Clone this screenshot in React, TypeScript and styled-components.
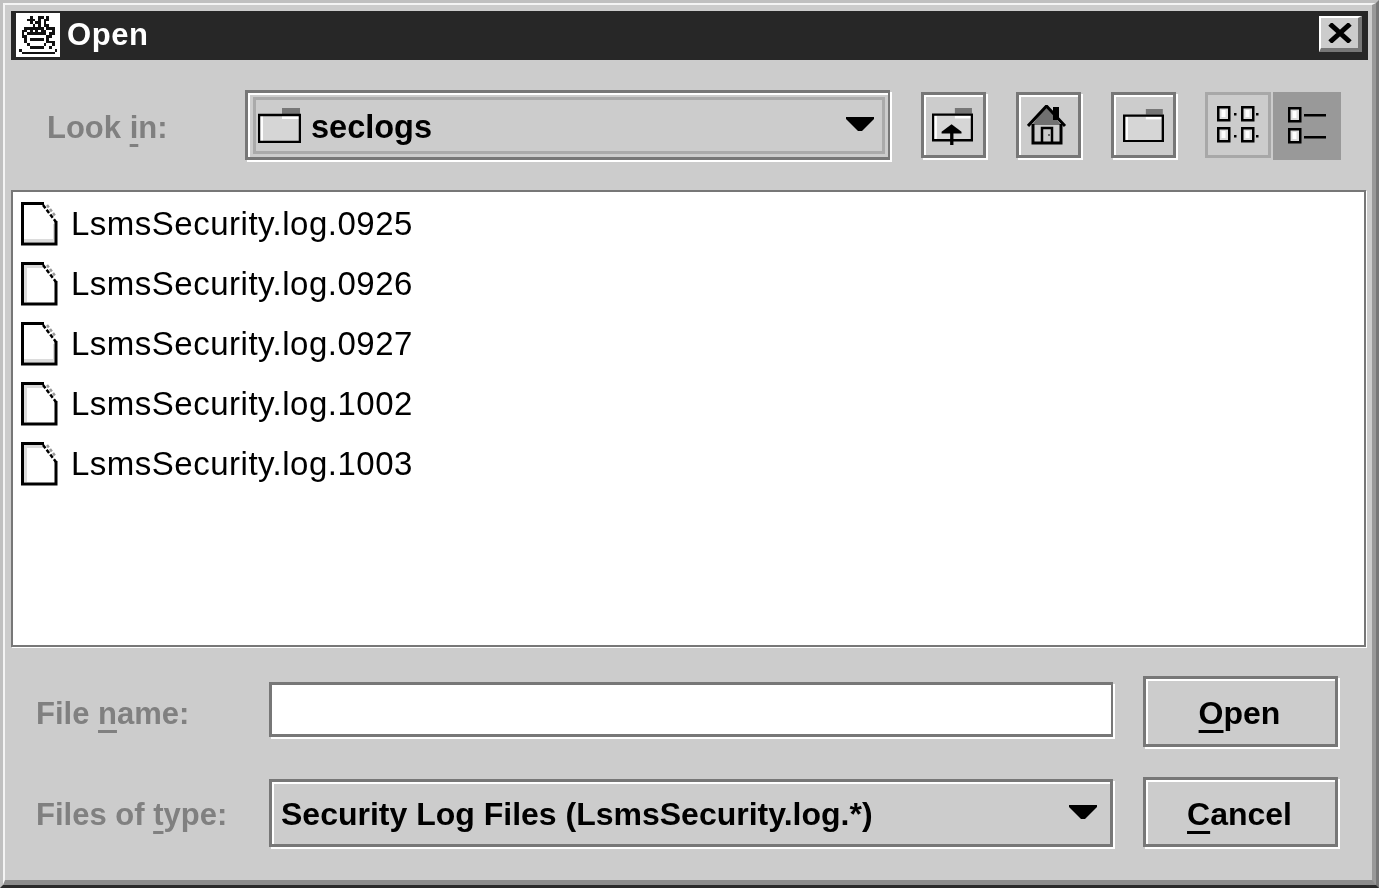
import React from "react"
import styled, { createGlobalStyle } from "styled-components"

const GlobalStyle = createGlobalStyle`
  html, body {
    margin: 0;
    padding: 0;
    background: #cccccc;
  }
  * {
    box-sizing: border-box;
  }
`

const FONT = `"Liberation Sans", Arial, sans-serif`

const Frame = styled.div`
  width: 1379px;
  height: 888px;
  border-style: solid;
  border-width: 3px;
  border-color: #c0c0c0 #777777 #2a2a2a #c0c0c0;
  font-family: ${FONT};
  overflow: hidden;
  filter: blur(0.35px);
`

const FrameInner = styled.div`
  height: 100%;
  border-style: solid;
  border-width: 2px 4px 5px 2px;
  border-color: #f4f4f4 #999999 #8c8c8c #f4f4f4;
  padding: 6px 4px 0 6px;
  background: #cccccc;
`

const TitleBar = styled.div`
  height: 49px;
  background: #272727;
  display: flex;
  align-items: center;
  padding: 0 6px 1px 5px;
`

const TitleText = styled.span`
  margin-left: 7px;
  color: #ffffff;
  font-size: 31px;
  font-weight: 700;
  letter-spacing: 0.6px;
`

const CloseButton = styled.div`
  margin-left: auto;
  margin-top: -2px;
  width: 43px;
  height: 36px;
  background: #cccccc;
  border-style: solid;
  border-width: 2px 4px 4px 2px;
  border-color: #ffffff #777777 #777777 #ffffff;
  display: flex;
  align-items: center;
  justify-content: center;
`

const ToolRow = styled.div`
  display: flex;
  align-items: flex-start;
  height: 72px;
  margin-top: 30px;
  padding-left: 36px;
`

const Label = styled.div<{ $width: number }>`
  width: ${(props) => props.$width}px;
  flex: none;
  color: #808080;
  font-size: 31px;
  font-weight: 700;
  white-space: nowrap;
`

const LookInLabel = styled(Label)`
  align-self: center;
  padding-top: 3px;
`

const Mnemonic = styled.span`
  text-decoration: underline;
  text-decoration-thickness: 3px;
  text-underline-offset: 6px;
  text-decoration-skip-ink: none;
`

const Etched = styled.div`
  border: 3px solid #777777;
  box-shadow: 2px 2px 0 0 #ffffff, inset 2px 2px 0 0 #ffffff;
`

const LookInCombo = styled(Etched)`
  width: 645px;
  height: 70px;
  margin-right: 1px;
  flex: none;
  border-right-width: 2px;
  padding: 4px 3px 3px 5px;
`

const LookInInner = styled.div`
  height: 100%;
  border: 3px solid #aaaaaa;
  display: flex;
  align-items: center;
  padding: 0 8px 0 2px;
  font-size: 32.5px;
  font-weight: 700;
  color: #000000;
`

const ComboText = styled.span`
  margin-left: 10px;
  padding-top: 4px;
  white-space: nowrap;
`

const ArrowIcon = styled.svg`
  display: block;
  margin-left: auto;
  margin-top: -4px;
  width: 28px;
  height: 14px;
`

const ToolButton = styled(Etched)`
  width: 65px;
  height: 66px;
  margin-left: 30px;
  margin-top: 2px;
  flex: none;
  display: flex;
  align-items: center;
  justify-content: center;
`

const ToggleGroup = styled.div`
  display: flex;
  align-items: flex-start;
  margin-left: 29px;
  margin-top: 2px;
  gap: 2px;
`

const Toggle = styled.div<{ $pressed?: boolean }>`
  width: ${(props) => (props.$pressed ? 68 : 66)}px;
  height: ${(props) => (props.$pressed ? 68 : 66)}px;
  display: flex;
  align-items: center;
  justify-content: center;
  background: ${(props) => (props.$pressed ? "#999999" : "transparent")};
  border: ${(props) => (props.$pressed ? "none" : "3px solid #a8a8a8")};
`

const FileList = styled.div`
  height: 457px;
  width: 1355px;
  margin-top: 28px;
  background: #ffffff;
  border: 2px solid #777777;
  box-shadow: 1px 1px 0 0 #ffffff;
  padding-top: 2px;
  padding-left: 8px;
`

const FileRow = styled.div`
  height: 60px;
  display: flex;
  align-items: center;
  font-size: 33px;
  font-weight: 400;
  color: #000000;
`

const FileName = styled.span`
  margin-left: 13px;
  white-space: nowrap;
  letter-spacing: 0.5px;
`

const FormRow = styled.div<{ $top: number }>`
  display: flex;
  align-items: flex-start;
  height: 72px;
  margin-top: ${(props) => props.$top}px;
  padding-left: 25px;
`

const FormLabel = styled(Label)`
  align-self: center;
  padding-top: 3px;
`

const Field = styled.div`
  width: 844px;
  height: 55px;
  margin-top: 6px;
  flex: none;
  background: #ffffff;
  border: 3px solid #777777;
  border-right-width: 2px;
  box-shadow: 2px 2px 0 0 #ffffff;
`

const TypeCombo = styled(Etched)`
  width: 844px;
  height: 68px;
  margin-top: 2px;
  flex: none;
  display: flex;
  align-items: center;
  padding: 4px 13px 2px 9px;
  font-size: 32px;
  font-weight: 700;
  color: #000000;
`

const TypeText = styled.span`
  white-space: nowrap;
`

const ActionButton = styled(Etched)<{ $height: number }>`
  width: 195px;
  height: ${(props) => props.$height}px;
  margin-left: 30px;
  padding: 4px 2px 0 0;
  flex: none;
  display: flex;
  align-items: center;
  justify-content: center;
  font-size: 32px;
  font-weight: 700;
  color: #000000;
`

const FolderSvg = styled.svg`
  flex: none;
  display: block;
`

const UpFolderSvg = styled.svg`
  display: block;
  margin-top: 3px;
  margin-right: 2px;
`

const HomeSvg = styled.svg`
  display: block;
  margin-right: 3px;
`

// Small pixel bitmap of the window icon, one char per pixel
const CUP_ROWS = [
  "................",
  ".....#..##.#....",
  "....###.#.##....",
  ".....#.##.#.....",
  "......#.#.##....",
  "...#######.###..",
  "..##.#.#.##..#..",
  "..#.#######.##..",
  "..##.......##...",
  "...#.#####.#....",
  "...#.......###..",
  "....#.....#..#..",
  ".....#####..#...",
  ".#............#.",
  "..############..",
  "................",
]

const CupIcon = () => (
  <FolderSvg width="44" height="44" viewBox="0 0 16 16" shapeRendering="crispEdges">
    <rect width="16" height="16" fill="#ffffff" />
    {CUP_ROWS.map((row, y) =>
      row.split("").map((c, x) => (c === "#" ? <rect key={`${x}-${y}`} x={x} y={y} width="1" height="1" fill="#111" /> : null)),
    )}
  </FolderSvg>
)

const CloseIcon = () => (
  <svg width="24" height="20" viewBox="0 0 24 20">
    <path d="M2 1 L22 19 M22 1 L2 19" stroke="#000" strokeWidth="5" fill="none" />
  </svg>
)

const Arrow = () => (
  <ArrowIcon viewBox="0 0 28 14">
    <path d="M0 0 H28 V2 L16 14 H12 L0 2 Z" fill="#000" />
  </ArrowIcon>
)

const FolderShape = () => (
  <>
    <rect x="24" y="0" width="18" height="6" fill="#777777" />
    <rect x="2" y="7" width="39" height="26" fill="#d6d6d6" />
    <rect x="24" y="8" width="17" height="3" fill="#ffffff" />
    <rect x="2" y="8" width="3" height="25" fill="#ffffff" />
    <path d="M1 34 V7 H42 V34 Z" stroke="#000" strokeWidth="2.5" fill="none" />
  </>
)

const FolderIcon = ({ small }: { small?: boolean }) => (
  <FolderSvg width={small ? 41 : 43} height={small ? 33 : 35} viewBox="0 0 43 35">
    <FolderShape />
  </FolderSvg>
)

const UpFolderIcon = () => (
  <UpFolderSvg width="41" height="37" viewBox="0 0 43 39">
    <FolderShape />
    <path d="M10 27 H31 V25 L20.5 17 L10 25 Z" fill="#000" />
    <rect x="19" y="25" width="3.5" height="14" fill="#000" />
  </UpFolderSvg>
)

const HomeIcon = () => (
  <HomeSvg width="40" height="40" viewBox="0 0 40 40">
    <path d="M19.5 1 L5 20 H34 Z" fill="#707070" />
    <rect x="26" y="2" width="6" height="13" fill="#000" />
    <path d="M1 21 L19.5 1 L38 21" stroke="#000" strokeWidth="3" fill="none" />
    <path d="M6 19 V38 H34 V19" stroke="#000" strokeWidth="3" fill="none" />
    <path d="M15 38 V23 H25 V38" stroke="#000" strokeWidth="2.5" fill="none" />
    <rect x="21" y="29" width="2" height="2" fill="#666" />
  </HomeSvg>
)

const SmallDoc = ({ x, y }: { x: number; y: number }) => (
  <>
    <rect x={x + 1.25} y={y + 1.25} width="11" height="13" fill="#dddddd" stroke="#000" strokeWidth="2.5" />
    <rect x={x + 4.5} y={y + 4} width="4" height="7" fill="#ffffff" />
  </>
)

const IconsViewIcon = () => (
  <svg width="42" height="38" viewBox="0 0 42 38">
    <SmallDoc x={0} y={0} />
    <SmallDoc x={24} y={0} />
    <SmallDoc x={0} y={21} />
    <SmallDoc x={24} y={21} />
    <rect x="17" y="7" width="2.5" height="2.5" fill="#000" />
    <rect x="39" y="7" width="2.5" height="2.5" fill="#000" />
    <rect x="17" y="29" width="2.5" height="2.5" fill="#000" />
    <rect x="39" y="29" width="2.5" height="2.5" fill="#000" />
  </svg>
)

const ListViewIcon = () => (
  <svg width="38" height="38" viewBox="0 0 38 38">
    <SmallDoc x={0} y={0} />
    <SmallDoc x={0} y={21} />
    <rect x="16" y="7" width="22" height="2.5" fill="#000" />
    <rect x="16" y="29" width="22" height="2.5" fill="#000" />
  </svg>
)

const DocIcon = ({ shadeTop }: { shadeTop: boolean }) => (
  <FolderSvg width="37" height="44" viewBox="0 0 37 44">
    <path d="M2 2 H23 L35 20 V42 H2 Z" fill="#ffffff" />
    {shadeTop ? (
      <path d="M3 3 H22 V6 H6 V40 H3 Z" fill="#dcdcdc" />
    ) : (
      <path d="M32 22 H34 V40 H3 V37 H32 Z" fill="#dcdcdc" />
    )}
    <path d="M23 1.5 H1.5 V42 H35 V19" stroke="#000" strokeWidth="3" fill="none" />
    <path d="M22 3 L35 20" stroke="#000" strokeWidth="2.5" strokeDasharray="4 2" fill="none" />
    <path d="M26 3 L35 15" stroke="#999" strokeWidth="2.5" strokeDasharray="3 2" fill="none" />
  </FolderSvg>
)

const FILES = [
  { name: "LsmsSecurity.log.0925", shadeTop: false },
  { name: "LsmsSecurity.log.0926", shadeTop: true },
  { name: "LsmsSecurity.log.0927", shadeTop: false },
  { name: "LsmsSecurity.log.1002", shadeTop: true },
  { name: "LsmsSecurity.log.1003", shadeTop: true },
]

const App = () => {
  return (
    <>
      <GlobalStyle />
      <Frame>
        <FrameInner>
          <TitleBar>
            <CupIcon />
            <TitleText>Open</TitleText>
            <CloseButton>
              <CloseIcon />
            </CloseButton>
          </TitleBar>

          <ToolRow>
            <LookInLabel $width={198}>
              Look <Mnemonic>i</Mnemonic>n:
            </LookInLabel>
            <LookInCombo>
              <LookInInner>
                <FolderIcon />
                <ComboText>seclogs</ComboText>
                <Arrow />
              </LookInInner>
            </LookInCombo>
            <ToolButton>
              <UpFolderIcon />
            </ToolButton>
            <ToolButton>
              <HomeIcon />
            </ToolButton>
            <ToolButton>
              <FolderIcon small />
            </ToolButton>
            <ToggleGroup>
              <Toggle>
                <IconsViewIcon />
              </Toggle>
              <Toggle $pressed>
                <ListViewIcon />
              </Toggle>
            </ToggleGroup>
          </ToolRow>

          <FileList>
            {FILES.map((file) => (
              <FileRow key={file.name}>
                <DocIcon shadeTop={file.shadeTop} />
                <FileName>{file.name}</FileName>
              </FileRow>
            ))}
          </FileList>

          <FormRow $top={29}>
            <FormLabel $width={233}>
              File <Mnemonic>n</Mnemonic>ame:
            </FormLabel>
            <Field />
            <ActionButton $height={71}>
              <span>
                <Mnemonic>O</Mnemonic>pen
              </span>
            </ActionButton>
          </FormRow>

          <FormRow $top={29}>
            <FormLabel $width={233}>
              Files of <Mnemonic>t</Mnemonic>ype:
            </FormLabel>
            <TypeCombo>
              <TypeText>Security Log Files (LsmsSecurity.log.*)</TypeText>
              <Arrow />
            </TypeCombo>
            <ActionButton $height={70}>
              <span>
                <Mnemonic>C</Mnemonic>ancel
              </span>
            </ActionButton>
          </FormRow>
        </FrameInner>
      </Frame>
    </>
  )
}

export default App
